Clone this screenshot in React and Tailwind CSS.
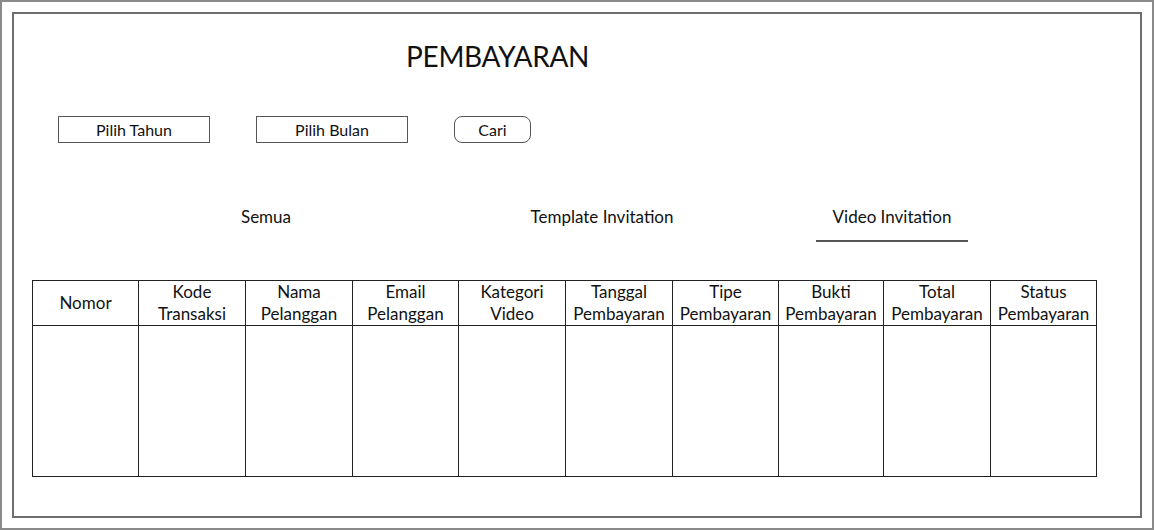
import React from 'react';

const columns = [
  { label: ['Nomor'], w: 106 },
  { label: ['Kode', 'Transaksi'], w: 107 },
  { label: ['Nama', 'Pelanggan'], w: 107 },
  { label: ['Email', 'Pelanggan'], w: 106 },
  { label: ['Kategori', 'Video'], w: 107 },
  { label: ['Tanggal', 'Pembayaran'], w: 107 },
  { label: ['Tipe', 'Pembayaran'], w: 106 },
  { label: ['Bukti', 'Pembayaran'], w: 105 },
  { label: ['Total', 'Pembayaran'], w: 107 },
  { label: ['Status', 'Pembayaran'], w: 106 },
];

const tabs = [
  { name: 'Semua', active: false },
  { name: 'Template Invitation', active: false },
  { name: 'Video Invitation', active: true },
];

export default function App() {
  return (
    <div className="w-[1154px] h-[530px] bg-white border-2 border-[#8a8a8a] p-[10px] text-[#111] font-['Lato',sans-serif]">
      <div className="h-full border-2 border-[#6e6e6e] flex flex-col">
        {/* Title */}
        <h1 className="ml-[392px] mt-[25px] text-[28px] leading-[34px] tracking-[-0.3px]">PEMBAYARAN</h1>

        {/* Filters */}
        <div className="flex mt-[43px] ml-[44px] gap-[46px]">
          <button className="w-[152px] h-[27px] border border-[#555] text-[16px] leading-none">Pilih Tahun</button>
          <button className="w-[152px] h-[27px] border border-[#555] text-[16px] leading-none">Pilih Bulan</button>
          <button className="w-[77px] h-[27px] border border-[#555] rounded-[8px] text-[16px] leading-none">Cari</button>
        </div>

        {/* Tabs */}
        <div className="flex mt-[57px] ml-[176px]">
          {tabs.map((t, i) => (
            <div
              key={t.name}
              className={`w-[152px] h-[42px] pt-[6px] flex justify-center text-[17px] leading-[22px] border-b-2 ${t.active ? 'border-[#555]' : 'border-transparent'} ${i === 1 ? 'ml-[184px]' : ''} ${i === 2 ? 'ml-[138px]' : ''}`}
            >
              {t.name}
            </div>
          ))}
        </div>

        {/* Table */}
        <table className="mt-[38px] ml-[18px] border-collapse table-fixed w-[1065px]">
          <thead>
            <tr className="h-[45px]">
              {columns.map((c) => (
                <th key={c.label.join(' ')} style={{ width: c.w }} className="border border-[#222] font-normal text-[17px] leading-[22px] p-0">
                  {c.label.map((l) => (
                    <div key={l}>{l}</div>
                  ))}
                </th>
              ))}
            </tr>
          </thead>
          <tbody>
            <tr className="h-[151px]">
              {columns.map((c) => (
                <td key={c.label.join(' ')} className="border border-[#222]"></td>
              ))}
            </tr>
          </tbody>
        </table>
      </div>
    </div>
  );
}
